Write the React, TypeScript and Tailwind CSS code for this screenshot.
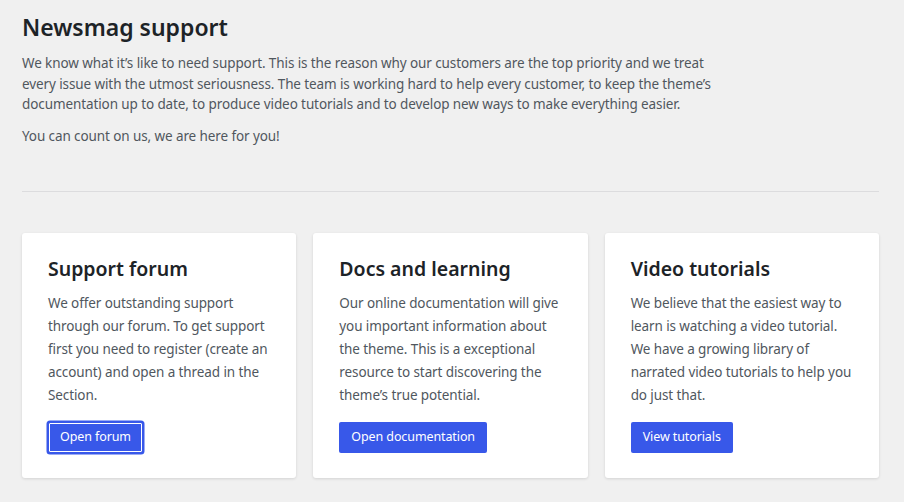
const cards = [
  {
    title: "Support forum",
    text: "We offer outstanding support through our forum. To get support first you need to register (create an account) and open a thread in the Section.",
    action: "Open forum",
    focused: true,
  },
  {
    title: "Docs and learning",
    text: "Our online documentation will give you important information about the theme. This is a exceptional resource to start discovering the theme’s true potential.",
    action: "Open documentation",
    focused: false,
  },
  {
    title: "Video tutorials",
    text: "We believe that the easiest way to learn is watching a video tutorial. We have a growing library of narrated video tutorials to help you do just that.",
    action: "View tutorials",
    focused: false,
  },
];

export default function App() {
  return (
    <div className="min-h-screen bg-[#f0f0f0] font-['Noto_Sans',sans-serif] text-[#50575e]">
      <div className="pl-[22px] pr-[25px] pt-[12px] pb-6">
        <h1 className="text-[23px] leading-[30px] font-semibold text-[#1d2327]">Newsmag support</h1>
        <div className="mt-[11px] max-w-[700px] text-[13.5px] leading-[20.5px] tracking-[-0.1px]">
          <p>
            We know what it’s like to need support. This is the reason why our customers are the top priority and we
            treat every issue with the utmost seriousness. The team is working hard to help every customer, to keep the
            theme’s documentation up to date, to produce video tutorials and to develop new ways to make everything
            easier.
          </p>
          <p className="mt-[11px]">You can count on us, we are here for you!</p>
        </div>

        <hr className="mt-[45px] border-[#dcdcde]" />

        <div className="mt-[41px] grid grid-cols-3 gap-[17px]">
          {cards.map((card) => (
            <div
              key={card.title}
              className="rounded-[3px] bg-white px-[26px] pt-[23px] pb-[25px] shadow-[0_1px_3px_rgba(0,0,0,0.12)]"
            >
              <h2 className="text-[19.5px] leading-[26px] font-semibold text-[#1d2327]">{card.title}</h2>
              <p className="mt-[10px] text-[13.5px] leading-[23px] tracking-[-0.1px] text-[#50575e]">{card.text}</p>
              <button
                type="button"
                className={`mt-[15px] h-[31px] rounded-[2px] bg-[#3858e9] px-[12px] text-[12.5px] tracking-[-0.1px] text-white ${
                  card.focused ? "ring-[1.5px] ring-[#3858e9] outline outline-1 -outline-offset-2 outline-white" : ""
                }`}
              >
                {card.action}
              </button>
            </div>
          ))}
        </div>
      </div>
    </div>
  );
}
